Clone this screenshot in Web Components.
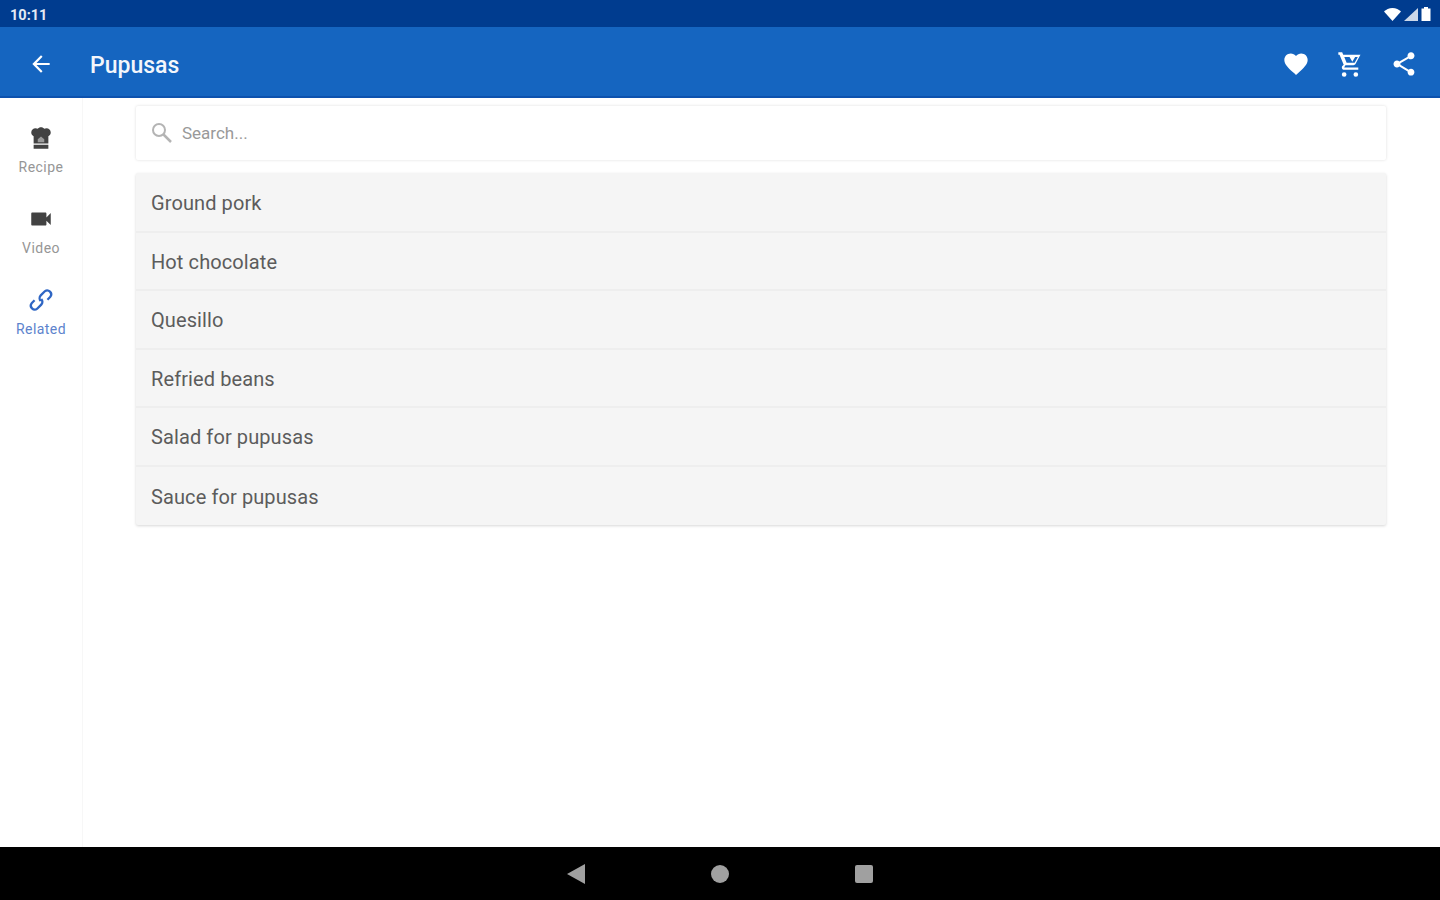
<!DOCTYPE html>
<html>
<head>
<meta charset="utf-8">
<title>Pupusas</title>
<style>
  html, body { margin: 0; height: 100%; }
  body { width: 1440px; height: 900px; overflow: hidden; font-family: Roboto, sans-serif; background: #fff; }
</style>
</head>
<body>
<app-screen>
  <status-bar slot="status"></status-bar>
  <app-bar slot="bar" title="Pupusas"></app-bar>
  <side-rail slot="rail"></side-rail>
  <search-box slot="main"></search-box>
  <item-list slot="main">
    <list-row>Ground pork</list-row>
    <list-row>Hot chocolate</list-row>
    <list-row>Quesillo</list-row>
    <list-row>Refried beans</list-row>
    <list-row>Salad for pupusas</list-row>
    <list-row>Sauce for pupusas</list-row>
  </item-list>
  <nav-bar slot="nav"></nav-bar>
</app-screen>

<script>
class AppScreen extends HTMLElement {
  constructor() {
    super();
    this.attachShadow({ mode: "open" });
    this.shadowRoot.innerHTML = `
      <style>
        :host { display: flex; flex-direction: column; width: 1440px; height: 900px; }
        .body { flex: 1; display: flex; min-height: 0; }
        .main { flex: 1; padding: 8px 54px 0 53px; display: flex; flex-direction: column; gap: 13px; }
      </style>
      <slot name="status"></slot>
      <slot name="bar"></slot>
      <div class="body">
        <slot name="rail"></slot>
        <div class="main"><slot name="main"></slot></div>
      </div>
      <slot name="nav"></slot>
    `;
  }
}

class StatusBar extends HTMLElement {
  constructor() {
    super();
    this.attachShadow({ mode: "open" });
    this.shadowRoot.innerHTML = `
      <style>
        :host { display: flex; align-items: center; justify-content: space-between; height: 27px; padding: 3px 9px 0 10px; background: #003c8f; color: #e4eaf4; font-size: 14.5px; font-weight: 700; box-sizing: border-box; }
        .icons { display: flex; align-items: center; gap: 3px; margin-top: -2px; }
        svg { display: block; fill: #fff; }
      </style>
      <span>10:11</span>
      <div class="icons">
        <svg width="17" height="13" viewBox="0 0 17 13"><path d="M8.5 13 0 3.6C2 1.5 5 0 8.5 0S15 1.500 17 3.600Z"/></svg>
        <svg width="14" height="13" viewBox="0 0 14 13"><path d="M14 0V13H0Z" opacity=".8"/></svg>
        <svg width="10" height="14" viewBox="0 0 10 14"><path d="M3 0H7V1.500H9.500V14H.5V1.500H3Z"/></svg>
      </div>
    `;
  }
}

class AppBar extends HTMLElement {
  constructor() {
    super();
    this.attachShadow({ mode: "open" });
    this.shadowRoot.innerHTML = `
      <style>
        :host { display: flex; align-items: center; height: 71px; box-sizing: border-box; padding: 5px 22px 0 28px; background: #1565c0; border-bottom: 2px solid #0d52ae; color: #f3f6fb; }
        svg { display: block; fill: #fff; }
        h1 { flex: 1; margin: 2px 0 0 36px; font-size: 23px; font-weight: 500; line-height: 1; }
        .actions { display: flex; align-items: center; gap: 26px; }
      </style>
      <svg width="26" height="26" viewBox="0 0 24 24"><path d="M20 11H7.830l5.590-5.590L12 4l-8 8 8 8 1.410-1.410L7.830 13H20z"/></svg>
      <h1>${this.getAttribute("title") || ""}</h1>
      <div class="actions">
        <svg width="28" height="28" viewBox="0 0 24 24"><path d="M12 21.350l-1.450-1.320C5.400 15.360 2 12.280 2 8.500 2 5.420 4.420 3 7.500 3c1.740 0 3.410.81 4.500 2.090C13.090 3.810 14.760 3 16.500 3 19.580 3 22 5.420 22 8.500c0 3.780-3.400 6.860-8.550 11.540z"/></svg>
        <svg width="28" height="28" viewBox="0 0 24 24"><path d="M2 2h3.300l.9 2H21l-1 1.800-3.300 6.200c-.35.6-1 1-1.750 1H8.100l-.9 1.600-.1.400h12v2H7c-1.100 0-2-.9-2-2 0-.35.1-.7.25-1L6.600 12.600 3 4H2zM7.100 6l2 5h6.900l2.700-5h-2.300l-2.400 4-2.400-4zM7 19a2 2 0 1 1 0 4 2 2 0 0 1 0-4zm10 0a2 2 0 1 1 0 4 2 2 0 0 1 0-4z"/></svg>
        <svg width="28" height="28" viewBox="0 0 24 24"><path d="M18 16.080c-.76 0-1.440.3-1.960.77L8.910 12.700c.05-.23.09-.46.09-.7s-.04-.47-.09-.7l7.050-4.110c.54.5 1.250.81 2.040.81 1.660 0 3-1.340 3-3s-1.340-3-3-3-3 1.340-3 3c0 .24.040.47.090.7L8.040 9.810C7.500 9.310 6.790 9 6 9c-1.660 0-3 1.340-3 3s1.340 3 3 3c.79 0 1.500-.31 2.040-.81l7.120 4.160c-.05.21-.08.43-.08.65 0 1.610 1.310 2.920 2.920 2.920s2.920-1.310 2.920-2.920-1.310-2.920-2.920-2.920z"/></svg>
      </div>
    `;
  }
}

class SideRail extends HTMLElement {
  constructor() {
    super();
    this.attachShadow({ mode: "open" });
    this.shadowRoot.innerHTML = `
      <style>
        :host { display: flex; flex-direction: column; width: 83px; box-sizing: border-box; padding-top: 27px; gap: 31px; border-right: 1px solid #f7f7f7; }
        .tab { display: flex; flex-direction: column; align-items: center; gap: 9px; height: 50px; font-size: 14px; letter-spacing: .45px; line-height: 15px; color: #969696; }
        .tab.on { color: #5d83cd; }
        svg { display: block; fill: #424242; }
        .on svg { fill: #2f66c4; }
      </style>
      <div class="tab">
        <svg width="26" height="26" viewBox="0 0 24 24"><path d="M12 2c1.300 0 2.400.6 3.100 1.500C15.500 3.200 16.200 3 17 3c2.200 0 4 1.800 4 3.900 0 1.500-.9 2.800-2.200 3.400V17H5.200v-6.700C3.900 9.700 3 8.400 3 6.900 3 4.800 4.800 3 7 3c.8 0 1.500.2 1.900.5C9.600 2.600 10.700 2 12 2zM5.200 18.200h13.600V22H5.200z"/><path d="M12 10.500l3 2.600V16H9v-2.900z" fill="#9a9a9a"/></svg>
        <span>Recipe</span>
      </div>
      <div class="tab">
        <svg width="26" height="26" viewBox="0 0 24 24"><path d="M17 10.500V7c0-.55-.45-1-1-1H4c-.55 0-1 .45-1 1v10c0 .55.450 1 1 1h12c.55 0 1-.45 1-1v-3.500l4 4v-11z"/></svg>
        <span>Video</span>
      </div>
      <div class="tab on">
        <svg width="26" height="26" viewBox="0 0 24 24"><path d="M14.800 3.200a4.700 4.700 0 0 1 6.600 6.600l-2.700 2.700-1.500-1.500 2.700-2.700a2.600 2.600 0 0 0-3.600-3.600l-3.800 3.800a2.600 2.600 0 0 0 0 3.600l-1.500 1.500a4.700 4.700 0 0 1 0-6.600zM9.200 20.800a4.700 4.700 0 0 1-6.600-6.600l2.700-2.700 1.500 1.500-2.700 2.700a2.600 2.600 0 0 0 3.600 3.600l3.800-3.800a2.600 2.600 0 0 0 0-3.600l1.500-1.500a4.700 4.700 0 0 1 0 6.600z"/></svg>
        <span>Related</span>
      </div>
    `;
  }
}

class SearchBox extends HTMLElement {
  constructor() {
    super();
    this.attachShadow({ mode: "open" });
    this.shadowRoot.innerHTML = `
      <style>
        :host { display: flex; align-items: center; height: 54px; box-sizing: border-box; padding: 0 15px 1px; gap: 9px; background: #fff; border-radius: 2px; box-shadow: 0 0 3px rgba(0,0,0,.14); font-size: 17px; color: #999; }
        svg { display: block; fill: none; stroke: #b4b4b4; stroke-width: 2; }
      </style>
      <svg width="22" height="22" viewBox="0 0 22 22"><circle cx="8" cy="8" r="6"/><path d="M12.500 12.500 20 20" stroke-width="2.500"/></svg>
      <span>Search...</span>
    `;
  }
}

class ItemList extends HTMLElement {
  constructor() {
    super();
    this.attachShadow({ mode: "open" });
    this.shadowRoot.innerHTML = `
      <style>
        :host { display: grid; box-sizing: border-box; height: 352px; padding-top: 1px; grid-auto-rows: 58.5px; background: #f5f5f5; border-radius: 2px; box-shadow: 0 1px 3px rgba(0,0,0,.16); }
      </style>
      <slot></slot>
    `;
  }
}

class ListRow extends HTMLElement {
  constructor() {
    super();
    this.attachShadow({ mode: "open" });
    this.shadowRoot.innerHTML = `
      <style>
        :host { display: flex; align-items: center; box-sizing: border-box; padding: 2px 15px 0; border-bottom: 2px solid #eeeeee; font-size: 20px; letter-spacing: .1px; color: #5c5c5c; }
        :host(:last-child) { border-bottom: 0; }
      </style>
      <slot></slot>
    `;
  }
}

class NavBar extends HTMLElement {
  constructor() {
    super();
    this.attachShadow({ mode: "open" });
    this.shadowRoot.innerHTML = `
      <style>
        :host { display: flex; align-items: center; justify-content: center; gap: 126px; height: 53px; background: #000; }
        svg { display: block; fill: #a0a0a0; }
      </style>
      <svg width="18" height="20" viewBox="0 0 18 20"><path d="M0 10 18 0V20Z"/></svg>
      <svg width="18" height="18" viewBox="0 0 18 18"><circle cx="9" cy="9" r="9"/></svg>
      <svg width="18" height="18" viewBox="0 0 18 18"><rect width="18" height="18" rx="2"/></svg>
    `;
  }
}

customElements.define("app-screen", AppScreen);
customElements.define("status-bar", StatusBar);
customElements.define("app-bar", AppBar);
customElements.define("side-rail", SideRail);
customElements.define("search-box", SearchBox);
customElements.define("item-list", ItemList);
customElements.define("list-row", ListRow);
customElements.define("nav-bar", NavBar);
</script>
</body>
</html>
